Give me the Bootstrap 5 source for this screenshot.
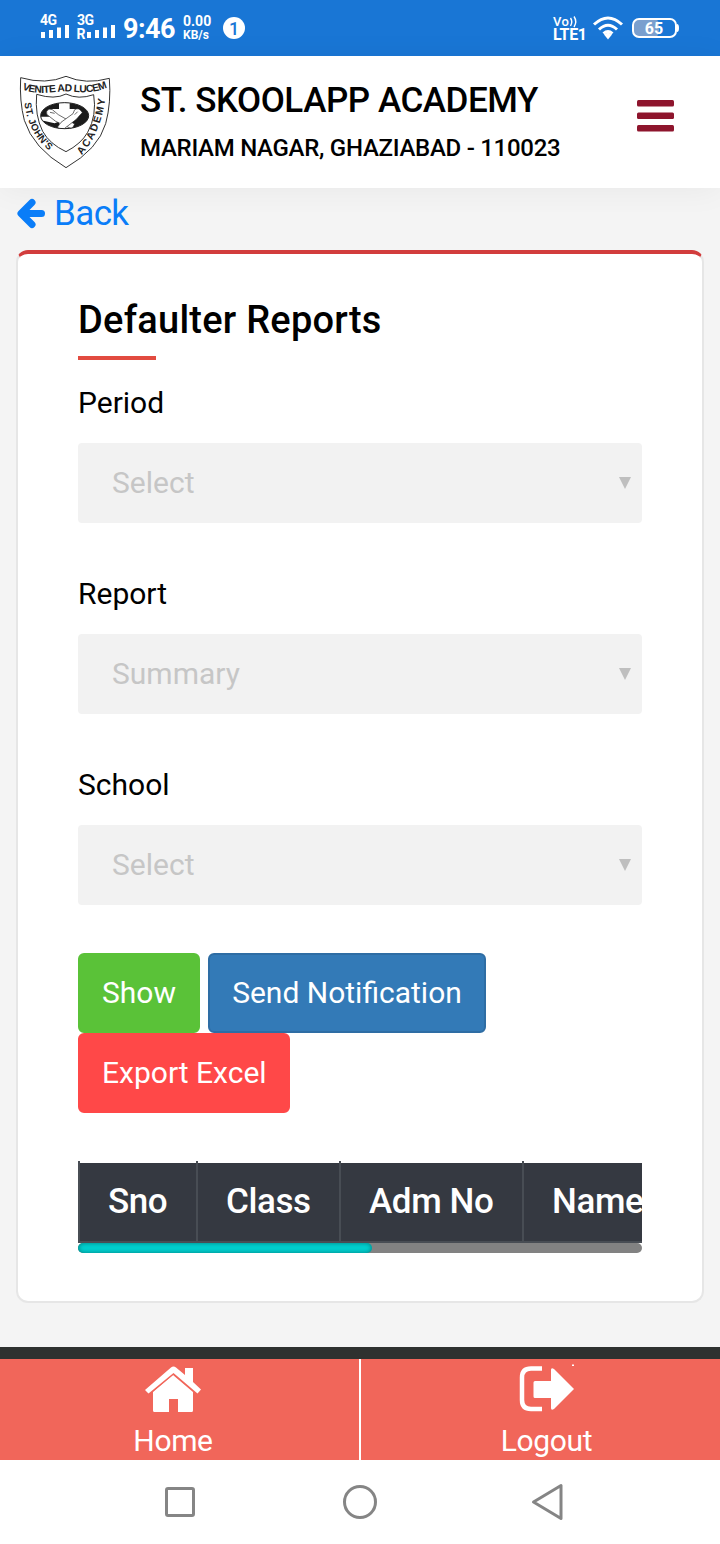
<!DOCTYPE html>
<html lang="en">
<head>
    <meta charset="UTF-8">
    <meta name="viewport" content="width=device-width, initial-scale=1.0">
    <title>Defaulter Reports</title>
    <link href="https://cdn.jsdelivr.net/npm/bootstrap@5.3.0/dist/css/bootstrap.min.css" rel="stylesheet">
    <style>
        body {
            font-family: Roboto, "Liberation Sans", sans-serif;
            background: #f4f4f4;
            color: #000;
            font-size: 30px;
            overflow-x: hidden;
        }
        svg { display: block; flex: none; }

        /* phone status bar */
        .status-bar { height: 56px; background: #1976d5; color: #fff; padding: 0 40px 0 39px; }
        .clock { font-size: 27px; font-weight: 700; line-height: 56px; width: 60px; padding-top: 2px; letter-spacing: -.5px; }
        .net-speed { font-size: 14px; font-weight: 700; line-height: 13px; width: 39px; }
        .net-speed .unit { font-size: 12px; }

        .school-bar { height: 132px; background: #fff; padding: 9px 46px 0 10px; box-shadow: 0 2px 30px rgba(0, 0, 0, .05); }
        .school-name { font-size: 35px; font-weight: 500; line-height: 42px; margin: 15px 0 0; white-space: nowrap; letter-spacing: -.45px; }
        .school-place { font-size: 24px; font-weight: 500; line-height: 30px; margin: 11px 0 0; white-space: nowrap; letter-spacing: -.28px; }
        .school-text { width: 497px; margin-left: 15px; }

        .back-row { height: 62px; padding: 1px 17px 0; }
        .back-row a { color: #0a7df8; font-size: 35px; line-height: 50px; height: 50px; letter-spacing: -.6px; }

        .report-card {
            margin: 0 16px 44px;
            height: 1053px;
            border: 2px solid #e6e6e6;
            border-top: 4px solid #d23d3d;
            border-radius: 12px;
            padding: 44px 60px 0;
        }
        .report-title { font-size: 38px; font-weight: 500; line-height: 44px; margin: 0; letter-spacing: .24px; }
        .title-line { width: 78px; height: 4px; background: #e24b40; margin: 14px 0 25px; }
        .field-label { line-height: 36px; margin-bottom: 22px; }
        .field-box {
            height: 80px;
            background: #f2f2f2;
            color: #c6c6c6;
            border-radius: 4px;
            padding: 0 11px 0 34px;
            margin-bottom: 53px;
        }
        .field-box span { padding-bottom: 2px; }
        .field-box.last { margin-bottom: 48px; }

        .action-row { column-gap: 8px; }
        .action { height: 80px; font-size: 30px; line-height: 76px; padding: 0 22px; border-width: 2px; border-radius: 6px; color: #fff; white-space: nowrap; }
        .action-show { width: 122px; background: #5ac238; border-color: #5ac238; }
        .action-send { width: 278px; background: #337ab7; border-color: #2e6da4; }
        .action-export { width: 212px; background: #ff4848; border-color: #ff4848; }

        .table-window { margin-top: 48px; height: 82px; overflow: hidden; }
        .head-row { height: 82px; width: 760px; color: #fff; font-size: 35px; font-weight: 500; line-height: 80px; letter-spacing: -.4px; }
        .head-cell {
            background: linear-gradient(#fff 2px, #353941 2px);
            border-left: 2px solid #484d54;
            border-bottom: 2px solid #484d54;
            padding: 1px 0 0 28px;
            white-space: nowrap;
            flex: none;
        }
        .col-sno { width: 118px; }
        .col-class { width: 143px; }
        .col-adm { width: 183px; }
        .col-name { width: 160px; }
        .scroll-track { height: 10px; background: #828282; border-radius: 5px; }
        .scroll-thumb { width: 294px; height: 10px; background: #00d0d0; border-radius: 5px; box-shadow: inset 0 0 5px rgba(0, 0, 0, .4); }

        .dark-strip { height: 12px; background: #2e312f; }
        .bottom-nav { height: 101px; background: #f1665a; }
        .bottom-nav a { color: #fff; line-height: 36px; height: 101px; padding-top: 5px; letter-spacing: -.35px; }
        .bottom-nav a:first-child { width: 361px; border-right: 2px solid #fff; padding-right: 13px; }
        .bottom-nav a:last-child { width: 359px; padding-left: 12px; }
        .bottom-nav span { margin-top: 10px; }
        .system-nav { height: 84px; background: #fff; padding: 0 154px 0 164px; }
        .system-nav svg:nth-child(2) { margin-right: 6px; }
    </style>
</head>
<body>
    <div class="status-bar d-flex align-items-center">
        <svg width="84" height="56" viewBox="39 0 84 56" fill="#fff" font-family="Roboto, sans-serif" font-weight="700">
            <text x="40" y="25" font-size="14" textLength="17">4G</text>
            <text x="77" y="25" font-size="14" textLength="17">3G</text>
            <text x="76.500" y="38.500" font-size="14">R</text>
            <path d="M41 32h4v6h-4zM49 30h4v8h-4zM57 27.500h4v10.500h-4zM65 25h4v13h-4zM87 32h4v6h-4zM95 30h4v8h-4zM103 27.500h4v10.500h-4zM111 25h4v13h-4z"/>
        </svg>
        <div class="clock">9:46</div>
        <div class="net-speed">0.00<br><span class="unit">KB/s</span></div>
        <svg width="24" height="24" viewBox="0 0 24 24"><circle cx="12" cy="12" r="11" fill="#fff"/><text x="12" y="18.500" text-anchor="middle" font-size="18" font-weight="500" fill="#1976d5">1</text></svg>
        <svg class="ms-auto" width="130" height="56" viewBox="551 0 130 56" fill="#fff" font-family="Roboto, sans-serif" font-weight="700">
            <text x="554" y="26" font-size="13" font-weight="500" textLength="16">Vo</text>
            <path d="M571.500 18q2.500 3.500 0 8M575 16.500q3.500 5 0 10.500" stroke="#fff" stroke-width="1.400" fill="none"/>
            <text x="554" y="40" font-size="16" textLength="34">LTE1</text>
            <g fill="none" stroke="#fff" stroke-width="3">
                <path d="M595 24.500q14-13 28 0M600 29.500q9-8.500 18 0"/>
                <path d="M604.500 33.500q4.500-4 9 0"/>
            </g>
            <path d="M605 34.500q4-3.500 8 0l-4 5z"/>
            <rect x="634" y="19" width="26" height="18" rx="5" fill="#7a9fce"/>
            <rect x="634" y="19" width="43" height="18" rx="6" fill="none" stroke="#fff" stroke-width="2"/>
            <path d="M678 24q2 0 2 4t-2 4z"/>
            <text x="655" y="33.500" text-anchor="middle" font-size="16">65</text>
        </svg>
    </div>

    <header class="school-bar d-flex">
        <!-- school crest -->
        <svg width="115" height="115" viewBox="0 0 345 345" font-family="Liberation Sans, sans-serif" font-weight="700">
            <defs>
                <path id="mottoTop" d="M36 73C80 92 125 80 168 79C210 80 245 91 305 62"/>
                <path id="mottoLeft" d="M44 113Q50 198 122 262"/>
                <path id="mottoRight" d="M215 271Q277 195 286 94"/>
                <clipPath id="oval"><ellipse cx="164" cy="152" rx="72" ry="39"/></clipPath>
            </defs>
            <g fill="none" stroke="#333" stroke-width="3">
                <path d="M32 38Q108 60 168 34Q227 60 298 40Q304 113 287 176Q265 252 168 308Q69 249 43 166Q28 108 32 38Z"/>
                <path d="M80 88Q134 105 168 87Q205 105 251 89Q261 151 233 202Q213 237 168 260Q119 237 98 199Q74 151 80 88Z"/>
            </g>
            <g fill="#222">
                <text font-size="31"><textPath href="#mottoTop" textLength="260">VENITE AD LUCEM</textPath></text>
                <text font-size="29"><textPath href="#mottoLeft" textLength="165">ST. JOHN'S</textPath></text>
                <text font-size="31"><textPath href="#mottoRight" textLength="186">ACADEMY</textPath></text>
            </g>
            <g clip-path="url(#oval)">
                <path d="M90 110h150v90H90z" fill="#1b1b1b"/>
                <path d="M147 108h32v24h23v26h-23v40h-32v-40h-26v-26h26z" fill="#fff"/>
                <path d="M90 155h42l18 14-16 6-44-10z" fill="#fff"/>
                <g fill="#fff" stroke="#222" stroke-width="2" stroke-linejoin="round">
                    <path d="M110 139q6-11 17-5l18 15 49 28-8 15-49-23-18-14q-13-6-9-16z"/>
                    <path d="M215 140q-8-14-21-6l-5 12-36 26-11 15 13 10 44-34 12-14q10-9 4-9z"/>
                </g>
                <path d="M120 142l14 3M194 149l9-9" stroke="#222" stroke-width="2"/>
            </g>
            <ellipse cx="164" cy="152" rx="72" ry="39" fill="none" stroke="#222" stroke-width="3"/>
        </svg>
        <div class="school-text">
            <h1 class="school-name">ST. SKOOLAPP ACADEMY</h1>
            <h2 class="school-place">MARIAM NAGAR, GHAZIABAD - 110023</h2>
        </div>
        <svg width="37" height="132" viewBox="0 65 37 132" fill="#8e152d"><rect y="100" width="37" height="6.500" rx="1.500"/><rect y="112.500" width="37" height="6.500" rx="1.500"/><rect y="125" width="37" height="6.500" rx="1.500"/></svg>
    </header>

    <main>
        <div class="back-row">
            <a href="#" class="d-inline-flex align-items-center text-decoration-none">
                <svg width="37" height="32" viewBox="0 0 37 32" fill="none" stroke="#0a7df8" stroke-linejoin="round" stroke-linecap="round"><path d="M15 4.500L4 15.500L15 26.500" stroke-width="7"/><path d="M6 15.500h18.500" stroke-width="7"/></svg>
                <span>Back</span>
            </a>
        </div>

        <section class="card report-card">
            <h3 class="report-title">Defaulter Reports</h3>
            <div class="title-line"></div>

            <div class="field-label">Period</div>
            <div class="field-box d-flex align-items-center justify-content-between">
                <span>Select</span>
                <svg width="12" height="12" fill="#bfbfbf"><path d="M0 0h12L6 12z"/></svg>
            </div>
            <div class="field-label">Report</div>
            <div class="field-box d-flex align-items-center justify-content-between">
                <span>Summary</span>
                <svg width="12" height="12" fill="#bfbfbf"><path d="M0 0h12L6 12z"/></svg>
            </div>
            <div class="field-label">School</div>
            <div class="field-box last d-flex align-items-center justify-content-between">
                <span>Select</span>
                <svg width="12" height="12" fill="#bfbfbf"><path d="M0 0h12L6 12z"/></svg>
            </div>

            <div class="action-row d-flex flex-wrap">
                <button class="btn action action-show">Show</button>
                <button class="btn action action-send">Send Notification</button>
                <button class="btn action action-export">Export Excel</button>
            </div>

            <div class="table-window">
                <div class="head-row d-flex">
                    <div class="head-cell col-sno">Sno</div>
                    <div class="head-cell col-class">Class</div>
                    <div class="head-cell col-adm">Adm No</div>
                    <div class="head-cell col-name">Name</div>
                </div>
            </div>
            <div class="scroll-track"><div class="scroll-thumb"></div></div>
        </section>
    </main>

    <div class="dark-strip"></div>
    <nav class="bottom-nav d-flex">
        <a href="#" class="d-flex flex-column align-items-center text-decoration-none">
            <svg width="58" height="49" viewBox="144 1364 58 49" fill="#fff">
                <path d="M153 1392L173 1375L193 1392V1410.500q0 1.500-1.500 1.500H178V1399h-9v13H154.500q-1.500 0-1.500-1.500z"/>
                <path d="M171 1367.500q2.500-2 5 0L185 1375V1368h8v14L201 1389.500l-3.500 4L173.500 1373L148.500 1393.500L145 1390z" stroke="#f1665a" stroke-width="2.500" paint-order="stroke"/>
            </svg>
            <span>Home</span>
        </a>
        <a href="#" class="d-flex flex-column align-items-center text-decoration-none">
            <svg width="58" height="49" viewBox="518 1363 58 49" fill="#fff">
                <path d="M542 1367.500h-11q-9 0-9 9v22.500q0 9 9 9h11" fill="none" stroke="#fff" stroke-width="4.500"/>
                <path d="M535 1380h16v-11q0-3 3-1l20 20-20 20q-3 2-3-1v-10h-16q-1.500 0-1.500-1.500v-14q0-1.500 1.500-1.500z"/>
                <path d="M572 1363.500h2v1.500h-2z"/>
            </svg>
            <span>Logout</span>
        </a>
    </nav>
    <div class="system-nav d-flex align-items-center justify-content-between">
        <svg width="32" height="40" viewBox="0 0 32 40" fill="none" stroke="#858585" stroke-width="3"><rect x="2.500" y="6.500" width="27" height="27" rx="1.500"/></svg>
        <svg width="36" height="40" viewBox="0 0 36 40" fill="none" stroke="#858585" stroke-width="3"><circle cx="18" cy="20" r="15.500"/></svg>
        <svg width="36" height="40" viewBox="0 0 36 40" fill="none" stroke="#858585" stroke-width="3" stroke-linejoin="round"><path d="M31 3.500v33L3.500 20z"/></svg>
    </div>
    <script src="https://cdn.jsdelivr.net/npm/bootstrap@5.3.0/dist/js/bootstrap.bundle.min.js"></script>
</body>
</html>
